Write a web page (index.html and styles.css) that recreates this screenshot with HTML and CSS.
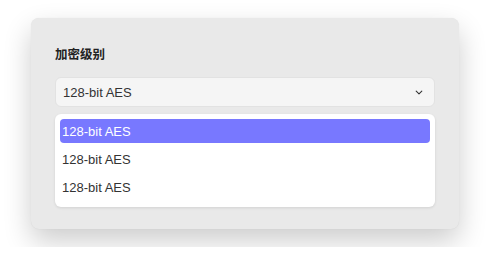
FILE: index.html
```html
<!DOCTYPE html>
<html lang="zh">
<head>
<meta charset="utf-8">
<link rel="stylesheet" href="styles.css">
</head>
<body>
<div class="card">
  <div class="label">加密级别</div>
  <div class="select">
    <span class="value">128-bit AES</span>
    <svg class="chev" width="8" height="5" viewBox="0 0 8 5"><path d="M1.2 1.2 L4 3.8 L6.8 1.2" fill="none" stroke="#333" stroke-width="1.1" stroke-linecap="round" stroke-linejoin="round"/></svg>
  </div>
  <ul class="menu">
    <li class="item active">128-bit AES</li>
    <li class="item">128-bit AES</li>
    <li class="item">128-bit AES</li>
  </ul>
</div>
</body>
</html>
```
FILE: styles.css
```css
html, body {
  margin: 0;
  background: #ffffff;
}
body {
  padding: 18px 31px;
  font-family: "Liberation Sans", "Noto Sans CJK SC", sans-serif;
}
.card {
  box-sizing: border-box;
  width: 428px;
  padding: 28px 24px 22px;
  background: #e9e9e9;
  border-radius: 8px;
  box-shadow: 0 12px 28px rgba(0,0,0,0.20), 0 0 1px rgba(0,0,0,0.10);
}
.label {
  font-size: 12.5px;
  font-weight: bold;
  line-height: 18px;
  color: #222;
  margin-bottom: 13px;
}
.select {
  box-sizing: border-box;
  height: 30px;
  display: flex;
  align-items: center;
  justify-content: space-between;
  padding: 0 11px 0 7px;
  background: #f5f5f5;
  border: 1px solid #e2e2e2;
  border-radius: 6px;
  font-size: 13px;
  color: #333;
}
.menu {
  list-style: none;
  margin: 7px 0 0;
  padding: 5px 5px 8px;
  background: #ffffff;
  border-radius: 6px;
  box-shadow: 0 1px 3px rgba(0,0,0,0.10);
  display: flex;
  flex-direction: column;
  gap: 4px;
}
.item {
  height: 24px;
  line-height: 26px;
  padding-left: 2px;
  font-size: 13px;
  color: #333;
  border-radius: 4px;
}
.item.active {
  background: #7878ff;
  color: #ffffff;
}
```
